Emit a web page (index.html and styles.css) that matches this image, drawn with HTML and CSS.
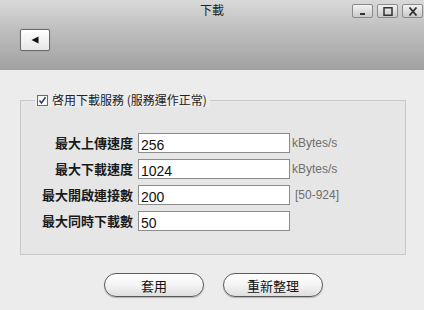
FILE: index.html
```html
<!DOCTYPE html>
<html lang="zh-Hant">
<head>
<meta charset="utf-8">
<title>下載</title>
<link rel="stylesheet" href="styles.css">
</head>
<body>
<div class="window">
  <header class="header">
    <div class="titlebar">
      <span></span>
      <span class="title">下載</span>
      <div class="winbtns">
        <button class="winbtn" aria-label="minimize"><svg width="9" height="9" viewBox="0 0 9 9"><rect x="2" y="6" width="5" height="2" fill="#333"/></svg></button>
        <button class="winbtn" aria-label="maximize"><svg width="10" height="9" viewBox="0 0 10 9"><rect x="1" y="0.75" width="8" height="7.5" fill="none" stroke="#333" stroke-width="1.5"/></svg></button>
        <button class="winbtn" aria-label="close"><svg width="10" height="9" viewBox="0 0 10 9"><path d="M1.5 0.5 L8.5 8.5 M8.5 0.5 L1.5 8.5" stroke="#333" stroke-width="1.8"/></svg></button>
      </div>
    </div>
    <div class="toolbar">
      <button class="backbtn" aria-label="back"><svg width="8" height="8" viewBox="0 0 8 8"><path d="M0.5 4 L7.5 0.5 L7.5 7.5 Z" fill="#111"/></svg></button>
    </div>
  </header>
  <main class="content">
    <fieldset class="group">
      <legend class="legend">
        <span class="check"><svg width="9" height="9" viewBox="0 0 9 9"><path d="M1.5 4.5 L3.5 7 L7.5 1.2" fill="none" stroke="#2d3f6b" stroke-width="1.6"/></svg></span>
        <span class="legend-text">啓用下載服務 (服務運作正常)</span>
      </legend>
      <div class="form">
        <label class="label">最大上傳速度</label>
        <input class="field" type="text" value="256">
        <span class="unit">kBytes/s</span>
        <label class="label">最大下載速度</label>
        <input class="field" type="text" value="1024">
        <span class="unit">kBytes/s</span>
        <label class="label">最大開啟連接數</label>
        <input class="field" type="text" value="200">
        <span class="unit range">[50-924]</span>
        <label class="label">最大同時下載數</label>
        <input class="field" type="text" value="50">
        <span class="unit"></span>
      </div>
    </fieldset>
    <div class="actions">
      <button class="pill">套用</button>
      <button class="pill">重新整理</button>
    </div>
  </main>
</div>
</body>
</html>
```

FILE: styles.css
```css
* { box-sizing: border-box; }
html, body { margin: 0; padding: 0; }
body {
  width: 424px;
  height: 310px;
  overflow: hidden;
  background: #ececec;
  font-family: "Liberation Sans", Arial, "Noto Sans CJK TC", sans-serif;
  color: #222;
}
.window { display: flex; flex-direction: column; height: 310px; }
.header {
  height: 70px;
  background: linear-gradient(to bottom, #d9d9d9 0%, #bdbdbd 45%, #a1a1a1 100%);
  display: flex;
  flex-direction: column;
}
.titlebar {
  display: grid;
  grid-template-columns: 1fr auto 1fr;
  align-items: start;
  height: 29px;
}
.title {
  font-family: "Noto Sans CJK TC", sans-serif;
  font-size: 12px;
  line-height: 14px;
  margin-top: 3px;
  color: #222;
}
.winbtns {
  display: flex;
  justify-content: flex-end;
  gap: 4px;
  padding-top: 4px;
  padding-right: 1px;
}
.winbtn {
  width: 21px;
  height: 14px;
  padding: 0;
  margin: 0;
  border: 1px solid #8a8a8a;
  border-radius: 2px;
  background: linear-gradient(to bottom, #f2f2f2, #c9c9c9);
  display: flex;
  align-items: center;
  justify-content: center;
}
.winbtn svg { display: block; }
.toolbar { padding-left: 20px; }
.backbtn {
  width: 30px;
  height: 22px;
  padding: 0;
  margin: 0;
  border: 1px solid #6a6a6a;
  border-radius: 2px;
  background: linear-gradient(to bottom, #ffffff, #e6e6e6);
  display: flex;
  align-items: center;
  justify-content: center;
  box-shadow: 0 0 1px rgba(0,0,0,0.3);
}
.backbtn svg { display: block; margin-left: -1px; }
.content { flex: 1; display: flex; flex-direction: column; }
.group {
  margin: 23px 0 0 20px;
  width: 386px;
  border: 1px solid #c9c9c9;
  background: #e6e6e6;
  padding: 26px 0 23px 14px;
  min-width: 0;
}
.legend {
  padding: 0 3px 0 2px;
  display: flex;
  align-items: center;
  gap: 4px;
  height: 14px;
  background: #ececec;
}
.check {
  width: 11px;
  height: 11px;
  border: 1px solid #5a6a8a;
  background: linear-gradient(to bottom, #f6f6f6, #ffffff);
  display: flex;
  align-items: center;
  justify-content: center;
}
.check svg { display: block; }
.legend-text {
  font-family: "Noto Sans CJK TC", sans-serif;
  font-size: 12px;
  line-height: 14px;
  color: #222;
  white-space: nowrap;
}
.form {
  display: grid;
  grid-template-columns: 98px 152px auto;
  column-gap: 5px;
  row-gap: 6px;
  align-items: center;
}
.label {
  font-family: "Noto Sans CJK TC", sans-serif;
  font-weight: bold;
  font-size: 13px;
  line-height: 20px;
  text-align: right;
  white-space: nowrap;
  color: #1a1a1a;
}
.field {
  width: 152px;
  height: 20px;
  border: 1px solid #8c8c8c;
  background: #fff;
  padding: 4px 2px 0 2px;
  margin: 0;
  font-family: "Liberation Sans", Arial, sans-serif;
  font-size: 14px;
  color: #111;
  outline: none;
}
.unit {
  margin-left: -3px;
  font-size: 12px;
  color: #6e6e6e;
  white-space: nowrap;
}
.unit.range { margin-left: 0; }
.actions {
  display: flex;
  justify-content: center;
  gap: 19px;
  margin-top: 18px;
  padding-left: 3px;
}
.pill {
  width: 100px;
  height: 24px;
  margin: 0;
  padding: 0;
  border: 1px solid #5a5a5a;
  border-radius: 12px / 12px;
  background: linear-gradient(to bottom, #ffffff 0%, #f4f4f4 50%, #dedede 100%);
  font-family: "Noto Sans CJK TC", sans-serif;
  font-size: 13px;
  color: #111;
  box-shadow: 0 1px 1px rgba(0,0,0,0.25);
}
```
